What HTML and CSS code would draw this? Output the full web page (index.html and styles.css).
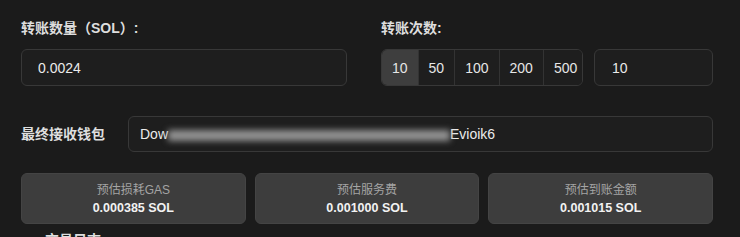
FILE: index.html
```html
<!DOCTYPE html>
<html>
<head>
  <meta charset="UTF-8">
  <title>SOL 转账</title>
  <link rel="stylesheet" href="styles.css">
</head>
<body>
  <div class="panel">
    <!-- Amount + count -->
    <div class="top-row">
      <div class="field">
        <label class="field-label" for="amount">转账数量（SOL）:</label>
        <input class="text-input" id="amount" type="text" value="0.0024">
      </div>
      <div class="field">
        <label class="field-label">转账次数:</label>
        <div class="count-row">
          <div class="btn-group">
            <button class="btn active">10</button>
            <button class="btn">50</button>
            <button class="btn">100</button>
            <button class="btn">200</button>
            <button class="btn">500</button>
          </div>
          <input class="text-input count-input" type="text" value="10">
        </div>
      </div>
    </div>

    <!-- Wallet -->
    <div class="wallet-row">
      <div class="wallet-label">最终接收钱包</div>
      <div class="wallet-input">Dow<span class="masked"></span>Evioik6</div>
    </div>

    <!-- Estimates -->
    <div class="stats">
      <div class="stat">
        <div class="stat-label">预估损耗GAS</div>
        <div class="stat-value">0.000385 SOL</div>
      </div>
      <div class="stat">
        <div class="stat-label">预估服务费</div>
        <div class="stat-value">0.001000 SOL</div>
      </div>
      <div class="stat">
        <div class="stat-label">预估到账金额</div>
        <div class="stat-value">0.001015 SOL</div>
      </div>
    </div>

    <div class="next-title">交易日志</div>
  </div>
</body>
</html>
```

FILE: styles.css
```css
* { box-sizing: border-box; }
body {
  margin: 0;
  background-color: #1b1b1b;
  font-family: "Liberation Sans", "Noto Sans CJK SC", sans-serif;
  color: #e6e6e6;
  overflow: hidden;
}
.panel {
  width: 692px;
  margin-left: 21px;
  padding-top: 18px;
}
.top-row {
  display: grid;
  grid-template-columns: 326px 332px;
  column-gap: 34px;
}
.field-label {
  display: block;
  font-size: 14px;
  line-height: 20px;
  font-weight: bold;
  color: #dedede;
  margin-bottom: 11px;
}
.text-input {
  width: 100%;
  height: 37px;
  padding: 0 16px;
  font-family: "Liberation Sans", sans-serif;
  font-size: 14px;
  color: #ebebeb;
  background-color: #1e1e1e;
  border: 1px solid #383838;
  border-radius: 6px;
  outline: none;
}
.count-row {
  display: flex;
  gap: 11px;
}
.btn-group {
  display: flex;
  height: 37px;
  border: 1px solid #383838;
  border-radius: 6px;
  overflow: hidden;
}
.btn {
  padding: 0 10px;
  font-family: "Liberation Sans", sans-serif;
  font-size: 14px;
  color: #e6e6e6;
  background-color: #1e1e1e;
  border: none;
  border-left: 1px solid #333;
}
.btn:first-child { border-left: none; }
.btn.active { background-color: #3e3e3e; }
.count-input {
  width: 119px;
  padding-left: 17px;
}
.wallet-row {
  display: flex;
  align-items: center;
  margin-top: 30px;
}
.wallet-label {
  width: 107px;
  font-size: 14px;
  font-weight: bold;
  color: #dedede;
  margin-top: -2px;
}
.wallet-input {
  flex: 1;
  height: 36px;
  display: flex;
  align-items: center;
  padding: 0 11px;
  font-size: 14px;
  color: #ebebeb;
  background-color: #1e1e1e;
  border: 1px solid #383838;
  border-radius: 6px;
}
.masked {
  display: inline-block;
  width: 282px;
  height: 11px;
  margin-top: 2px;
  background-color: #929292;
  filter: blur(3px);
}
.stats {
  display: grid;
  grid-template-columns: 1fr 1fr 1fr;
  gap: 9px;
  margin-top: 21px;
}
.stat {
  height: 51px;
  padding-top: 8px;
  text-align: center;
  background-color: #3d3d3d;
  border: 1px solid #444;
  border-radius: 6px;
}
.stat-label {
  font-size: 12px;
  line-height: 16px;
  color: #a4a4a4;
}
.stat-value {
  margin-top: 1px;
  font-size: 12.5px;
  line-height: 18px;
  font-weight: bold;
  color: #f2f2f2;
}
.next-title {
  margin-top: 6px;
  padding-left: 24px;
  font-size: 14px;
  line-height: 20px;
  font-weight: bold;
  color: #dedede;
}
```
